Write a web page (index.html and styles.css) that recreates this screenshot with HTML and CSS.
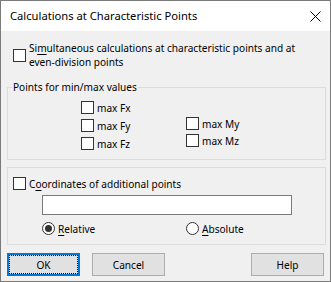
FILE: index.html
```html
<!DOCTYPE html>
<html lang="en">
<head>
    <meta charset="UTF-8">
    <title>Calculations at Characteristic Points</title>
    <link rel="stylesheet" href="styles.css">
</head>
<body>
    <div class="window">
        <div class="titlebar">
            <span class="title">Calculations at Characteristic Points</span>
            <span class="close">
                <svg width="11" height="11" viewBox="0 0 11 11"><path d="M0.5 0.5L10.5 10.5M10.5 0.5L0.5 10.5" stroke="#000" stroke-width="1" fill="none"/></svg>
            </span>
        </div>
        <div class="dialog">
            <label class="check check-top">
                <span class="box"></span>
                <span class="text">Si<u>m</u>ultaneous calculations at characteristic points and at <span class="nowrap">even-division</span> points</span>
            </label>

            <fieldset class="group group-minmax">
                <legend>Points for min/max values</legend>
                <div class="cols">
                    <div class="col col-f">
                        <label class="check"><span class="box"></span><span class="text">max Fx</span></label>
                        <label class="check"><span class="box"></span><span class="text">max Fy</span></label>
                        <label class="check"><span class="box"></span><span class="text">max Fz</span></label>
                    </div>
                    <div class="col col-m">
                        <label class="check"><span class="box"></span><span class="text">max My</span></label>
                        <label class="check"><span class="box"></span><span class="text">max Mz</span></label>
                    </div>
                </div>
            </fieldset>

            <div class="group group-coords">
                <label class="check">
                    <span class="box"></span>
                    <span class="text">C<u>o</u>ordinates of additional points</span>
                </label>
                <input type="text" class="coords-input">
                <div class="radios">
                    <label class="radio radio-rel"><span class="dot checked"></span><span class="text"><u>R</u>elative</span></label>
                    <label class="radio"><span class="dot"></span><span class="text"><u>A</u>bsolute</span></label>
                </div>
            </div>

            <div class="buttons">
                <button class="btn btn-default">OK</button>
                <button class="btn">Cancel</button>
                <button class="btn btn-help">Help</button>
            </div>
        </div>
    </div>
</body>
</html>
```

FILE: styles.css
```css
body {
    margin: 0;
    padding: 0;
    font-family: 'Noto Sans', 'Liberation Sans', sans-serif;
    font-size: 10.1px;
    color: #000;
    background: #f0f0f0;
}
.window {
    width: 331px;
    height: 282px;
    box-sizing: border-box;
    border: 1px solid #7a7a7a;
    background-color: #f0f0f0;
    overflow: hidden;
}
.titlebar {
    height: 30px;
    background-color: #fff;
    display: flex;
    align-items: center;
    padding-left: 9px;
    padding-right: 9px;
}
.title {
    flex: 1;
    font-size: 11.2px;
    line-height: 16px;
}
.close {
    display: flex;
}
.dialog {
    padding: 10px 4px 0 6px;
    display: flex;
    flex-direction: column;
}
.check,
.radio {
    display: flex;
    align-items: center;
    height: 17px;
}
.box {
    width: 13px;
    height: 13px;
    box-sizing: border-box;
    border: 1px solid #333;
    background-color: #fff;
    margin-right: 3px;
    flex-shrink: 0;
}
.text {
    line-height: 16px;
}
.check-top {
    height: 28px;
    margin-left: 6px;
}
.check-top .text {
    line-height: 14px;
}
.nowrap {
    white-space: nowrap;
}
u {
    text-underline-offset: 2px;
}
.group {
    border: 1px solid #dcdcdc;
    margin: 0;
    padding: 0;
    min-width: 0;
}
.group legend {
    margin-left: 4px;
    padding: 0 1px;
    line-height: 16px;
}
.group-minmax {
    margin-top: 10px;
}
.cols {
    display: flex;
    padding: 4px 0 7px 73px;
}
.col {
    display: flex;
    flex-direction: column;
}
.col-f {
    width: 105px;
    gap: 1px;
}
.col-m {
    padding-top: 16px;
}
.group-coords {
    margin-top: 7px;
    padding: 7px 0 7px 5px;
}
.coords-input {
    display: block;
    margin: 3px 0 0 29px;
    width: 250px;
    height: 20px;
    box-sizing: border-box;
    border: 1px solid #7a7a7a;
    background-color: #fff;
    padding: 0 3px;
    font: inherit;
}
.radios {
    display: flex;
    margin: 5px 0 0 29px;
}
.radio-rel {
    width: 144px;
}
.dot {
    width: 13px;
    height: 13px;
    box-sizing: border-box;
    border: 1px solid #333;
    border-radius: 50%;
    background-color: #fff;
    margin-right: 3px;
    display: flex;
    align-items: center;
    justify-content: center;
}
.dot.checked::after {
    content: "";
    width: 7px;
    height: 7px;
    border-radius: 50%;
    background-color: #333;
}
.buttons {
    display: flex;
    margin-top: 8px;
    padding-right: 2px;
}
.btn {
    width: 73px;
    height: 23px;
    box-sizing: border-box;
    border: 1px solid #adadad;
    background-color: #e1e1e1;
    font: inherit;
    color: #000;
    padding: 0;
    margin-right: 12px;
}
.btn-default {
    border: 2px solid #0078d7;
    outline: 1px dotted #000;
    outline-offset: -3px;
}
.btn-help {
    margin-left: auto;
    margin-right: 0;
}
```
